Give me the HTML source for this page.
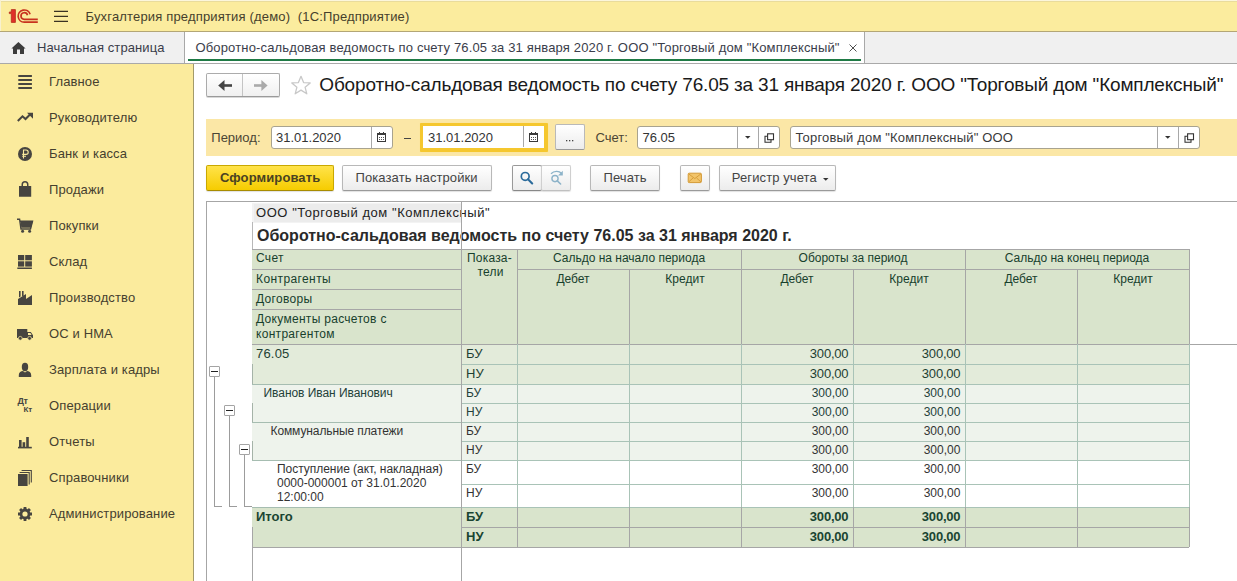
<!DOCTYPE html>
<html><head><meta charset="utf-8"><style>
html,body{margin:0;padding:0}
body{width:1237px;height:581px;overflow:hidden;position:relative;background:#fff;font-family:"Liberation Sans",sans-serif}
.a{position:absolute}
.t{white-space:nowrap}
</style></head><body>
<div class="a" style="left:0px;top:0px;width:1237px;height:31px;background:#fbec9e"></div>
<div class="a" style="left:0px;top:0px;width:1237px;height:1px;background:#fbf6dc"></div>
<div class="a" style="left:0px;top:1px;width:1237px;height:1px;background:#e9dc9c"></div>
<div class="a" style="left:0px;top:0px;width:1px;height:31px;background:#f8f1cf"></div>
<div class="a" style="left:0px;top:31px;width:1237px;height:1px;background:#b3a676"></div>
<svg class="a" style="left:0px;top:0px;" width="44" height="31" viewBox="0 0 44 31"><path d="M11.3,9.6 H15.4 V22.4 H11.3 V13.6 H9.3 V12 H11.3 Z" fill="#e0302a" stroke="#b5301a" stroke-width="0.8" stroke-linejoin="miter"/>
<g fill="none" stroke="#c8321e" stroke-width="1.7">
<path d="M37.8,22.2 H24.3 A6.1,6.1 0 1,1 30.1,14.3"/>
<path d="M37.8,19.3 H24.3 A3.3,3.3 0 1,1 27.5,15.2"/>
</g></svg>
<svg class="a" style="left:50px;top:6px;" width="22" height="20" viewBox="0 0 22 20"><g stroke="#3a3222" stroke-width="1.2"><path d="M4,5.4 H18 M4,10.4 H18 M4,15.4 H18"/></g></svg>
<div class="a t" style="left:85.5px;top:10.00px;font-size:13px;line-height:13px;font-weight:400;color:#463f2c;letter-spacing:0.17px">Бухгалтерия предприятия (демо)&nbsp; (1С:Предприятие)</div>
<div class="a" style="left:0px;top:32px;width:1237px;height:31px;background:#f0f0f0"></div>
<div class="a" style="left:0px;top:63px;width:1237px;height:1px;background:#a9a9a9"></div>
<svg class="a" style="left:6px;top:36px;" width="30" height="24" viewBox="0 0 30 24"><path fill="#3c3c3c" d="M12.4,6 L19.6,12.6 H18 V18 H14 V13.4 H11 V18 H7 V12.6 H5.4 Z"/></svg>
<div class="a t" style="left:37px;top:41.00px;font-size:13px;line-height:13px;font-weight:400;color:#3a3d4a;letter-spacing:0.1px">Начальная страница</div>
<div class="a" style="left:184px;top:32px;width:1px;height:31px;background:#a8a8a8"></div>
<div class="a" style="left:185px;top:32px;width:679px;height:31px;background:#ffffff"></div>
<div class="a" style="left:864px;top:32px;width:1px;height:31px;background:#a8a8a8"></div>
<div class="a t" style="left:195.5px;top:41.00px;font-size:13px;line-height:13px;font-weight:400;color:#3a3d4a;letter-spacing:0.15px">Оборотно-сальдовая ведомость по счету 76.05 за 31 января 2020 г. ООО "Торговый дом "Комплексный"</div>
<div class="a" style="left:188px;top:59px;width:673px;height:2px;background:#1f7a45"></div>
<svg class="a" style="left:846px;top:41px;" width="14" height="14" viewBox="0 0 14 14"><path d="M3.5,3.5 L10.5,10.5 M10.5,3.5 L3.5,10.5" stroke="#505050" stroke-width="1"/></svg>
<div class="a" style="left:0px;top:64px;width:193px;height:517px;background:#fbeb9d"></div>
<div class="a" style="left:193px;top:64px;width:1px;height:517px;background:#a39b6a"></div>
<div class="a t" style="left:49px;top:75.00px;font-size:13px;line-height:13px;font-weight:400;color:#45402f;letter-spacing:0.13px">Главное</div>
<div class="a t" style="left:49px;top:111.00px;font-size:13px;line-height:13px;font-weight:400;color:#45402f;letter-spacing:0.13px">Руководителю</div>
<div class="a t" style="left:49px;top:147.00px;font-size:13px;line-height:13px;font-weight:400;color:#45402f;letter-spacing:0.13px">Банк и касса</div>
<div class="a t" style="left:49px;top:183.00px;font-size:13px;line-height:13px;font-weight:400;color:#45402f;letter-spacing:0.13px">Продажи</div>
<div class="a t" style="left:49px;top:219.00px;font-size:13px;line-height:13px;font-weight:400;color:#45402f;letter-spacing:0.13px">Покупки</div>
<div class="a t" style="left:49px;top:255.00px;font-size:13px;line-height:13px;font-weight:400;color:#45402f;letter-spacing:0.13px">Склад</div>
<div class="a t" style="left:49px;top:291.00px;font-size:13px;line-height:13px;font-weight:400;color:#45402f;letter-spacing:0.13px">Производство</div>
<div class="a t" style="left:49px;top:327.00px;font-size:13px;line-height:13px;font-weight:400;color:#45402f;letter-spacing:0.13px">ОС и НМА</div>
<div class="a t" style="left:49px;top:363.00px;font-size:13px;line-height:13px;font-weight:400;color:#45402f;letter-spacing:0.13px">Зарплата и кадры</div>
<div class="a t" style="left:49px;top:399.00px;font-size:13px;line-height:13px;font-weight:400;color:#45402f;letter-spacing:0.13px">Операции</div>
<div class="a t" style="left:49px;top:435.00px;font-size:13px;line-height:13px;font-weight:400;color:#45402f;letter-spacing:0.13px">Отчеты</div>
<div class="a t" style="left:49px;top:471.00px;font-size:13px;line-height:13px;font-weight:400;color:#45402f;letter-spacing:0.13px">Справочники</div>
<div class="a t" style="left:49px;top:507.00px;font-size:13px;line-height:13px;font-weight:400;color:#45402f;letter-spacing:0.13px">Администрирование</div>
<svg class="a" style="left:17px;top:74px;" width="16" height="16" viewBox="0 0 16 16"><g fill="#474540"><rect x="1.3" y="1" width="13.6" height="2"/><rect x="1.3" y="5" width="13.6" height="2"/><rect x="1.3" y="9" width="13.6" height="2"/><rect x="1.3" y="13" width="13.6" height="2"/></g></svg>
<svg class="a" style="left:16px;top:110px;" width="18" height="14" viewBox="0 0 18 14"><path d="M1.8,11 L6.5,6.3 L9.5,9 L14.5,4" stroke="#474540" stroke-width="2" fill="none"/><path d="M11,2.8 H17 V8.8 Z" fill="#474540"/></svg>
<svg class="a" style="left:17px;top:146px;" width="16" height="16" viewBox="0 0 16 16"><circle cx="8" cy="8" r="7" fill="#474540"/><path d="M6.5,12.5 V4 H9 A2.2,2.2 0 0 1 9,8.4 H5.2 M5.2,10.2 H9" stroke="#fbeb9d" stroke-width="1.1" fill="none"/></svg>
<svg class="a" style="left:17px;top:180px;" width="16" height="18" viewBox="0 0 16 18"><path d="M2,6 H4.5 V4.5 A3.5,3.5 0 0 1 11.5,4.5 V6 H14.2 V16.8 H2 Z M6,6 H10 V4.6 A2,2 0 0 0 6,4.6 Z" fill="#474540" fill-rule="evenodd"/></svg>
<svg class="a" style="left:16px;top:217px;" width="18" height="17" viewBox="0 0 18 17"><path d="M1,2.3 H3.6 L5,12 H14.5 L16.5,4.3 H4.5" fill="none" stroke="#474540" stroke-width="1.4"/><path d="M4.4,4.2 H16.8 L15,10.8 H5.3 Z" fill="#474540"/><circle cx="6.6" cy="14.2" r="1.5" fill="#474540"/><circle cx="13.6" cy="14.2" r="1.5" fill="#474540"/></svg>
<svg class="a" style="left:17px;top:254px;" width="16" height="16" viewBox="0 0 16 16"><g fill="#474540"><rect x="1" y="1" width="6.2" height="5.3"/><rect x="8.2" y="1" width="6.7" height="5.3"/><rect x="1" y="7.3" width="6.2" height="5.3"/><rect x="8.2" y="7.3" width="6.7" height="5.3"/><rect x="0.3" y="13.5" width="14.6" height="1.5"/></g></svg>
<svg class="a" style="left:17px;top:290px;" width="16" height="16" viewBox="0 0 16 16"><path d="M1,15 V9 L9,4 V9 L15,5 V15 Z M2,1 H3.6 V6.5 L2,7.4 Z M5,1 H6.6 V5.4 L5,6.3 Z" fill="#474540"/></svg>
<svg class="a" style="left:16px;top:328px;" width="18" height="13" viewBox="0 0 18 13"><path d="M1,1 H11.3 V4 H14.8 L17,7.2 V10 H1 Z" fill="#474540"/><path d="M12,5 H14.4 L15.6,7 H12 Z" fill="#fbeb9d"/><circle cx="4.3" cy="10.3" r="1.9" fill="#474540" stroke="#fbeb9d" stroke-width="0.7"/><circle cx="13.6" cy="10.3" r="1.9" fill="#474540" stroke="#fbeb9d" stroke-width="0.7"/></svg>
<svg class="a" style="left:17px;top:362px;" width="16" height="16" viewBox="0 0 16 16"><ellipse cx="8" cy="5" rx="3.2" ry="4.2" fill="#474540"/><path d="M1.8,15 V13 C1.8,10.4 4,9.2 6,9 L8,10.5 L10,9 C12,9.2 14.2,10.4 14.2,13 V15 Z" fill="#474540"/></svg>
<div class="a t" style="left:17.5px;top:397px;font-size:9px;line-height:9px;font-weight:700;color:#474540;letter-spacing:-0.3px">Дт</div>
<div class="a t" style="left:23.6px;top:406px;font-size:8px;line-height:8px;font-weight:700;color:#474540;letter-spacing:-0.3px">Кт</div>
<svg class="a" style="left:17px;top:435px;" width="16" height="14" viewBox="0 0 16 14"><g fill="#474540"><rect x="2" y="5" width="2.6" height="7.6"/><rect x="5.6" y="7.2" width="2.6" height="5.4"/><rect x="9.2" y="2" width="2.6" height="10.6"/><rect x="1" y="11.8" width="13.8" height="1.6"/></g></svg>
<svg class="a" style="left:17px;top:468px;" width="16" height="19" viewBox="0 0 16 19"><rect x="1" y="6" width="9.6" height="12" fill="#474540"/><path d="M2.6,4.5 H12.2 V16.5 M4.6,2.5 H14.3 V14.5" stroke="#474540" stroke-width="1.1" fill="none"/></svg>
<svg class="a" style="left:17px;top:506px;" width="16" height="16" viewBox="0 0 16 16"><circle cx="8" cy="8" r="5.4" fill="#474540"/><g stroke="#474540" stroke-width="2.8"><path d="M8,1 V4 M8,12 V15 M1,8 H4 M12,8 H15 M3.05,3.05 L5.2,5.2 M10.8,10.8 L12.95,12.95 M12.95,3.05 L10.8,5.2 M5.2,10.8 L3.05,12.95"/></g><circle cx="8" cy="8" r="2.6" fill="#fbeb9d"/></svg>
<div class="a" style="left:206px;top:73px;width:72px;height:22px;border:1px solid #ababab;border-bottom-color:#9a9a9a;border-radius:2px;background:linear-gradient(#ffffff,#f0f0f0);box-shadow:0 1px 0 #d8d8d8"></div>
<div class="a" style="left:242px;top:74px;width:1px;height:22px;background:#c4c4c4"></div>
<svg class="a" style="left:216px;top:78px;" width="20" height="16" viewBox="0 0 20 16"><path d="M2.2,7.5 L8.5,2 V13 Z" fill="#444"/><rect x="7" y="6.2" width="9" height="2.6" fill="#444"/></svg>
<svg class="a" style="left:252px;top:78px;" width="20" height="16" viewBox="0 0 20 16"><path d="M15.6,7.5 L9.4,2 V13 Z" fill="#aaa"/><rect x="2" y="6.2" width="9" height="2.6" fill="#aaa"/></svg>
<svg class="a" style="left:290px;top:74px;" width="22" height="22" viewBox="0 0 22 22"><path d="M11,2.3 L13.6,8.6 L20.2,8.9 L15.1,13.2 L16.8,19.8 L11,16.1 L5.2,19.8 L6.9,13.2 L1.8,8.9 L8.4,8.6 Z" fill="none" stroke="#c8c8c8" stroke-width="1.3" stroke-linejoin="round"/></svg>
<div class="a t" style="left:319.3px;top:74.92px;font-size:19px;line-height:19px;font-weight:400;color:#1a1a1a;letter-spacing:-0.17px">Оборотно-сальдовая ведомость по счету 76.05 за 31 января 2020 г. ООО "Торговый дом "Комплексный"</div>
<div class="a" style="left:206px;top:119px;width:1031px;height:37px;background:#fbe7a6"></div>
<div class="a t" style="left:211.3px;top:131.00px;font-size:13px;line-height:13px;font-weight:400;color:#4a4535;">Период:</div>
<div class="a" style="left:271px;top:126px;width:120px;height:21px;border:1px solid #a8a38f;border-radius:3px;background:#fff;"></div>
<div class="a" style="left:371px;top:127px;width:1px;height:21px;background:#a8a8a8"></div>
<svg class="a" style="left:377px;top:132px;" width="9" height="10" viewBox="0 0 9 10"><g shape-rendering="crispEdges"><rect x="0.5" y="1.5" width="8" height="8" fill="none" stroke="#3a3a3a" stroke-width="1"/><rect x="0" y="1" width="9" height="2" fill="#3a3a3a"/><rect x="2" y="0" width="1" height="1" fill="#3a3a3a"/><rect x="6" y="0" width="1" height="1" fill="#3a3a3a"/><g fill="#555"><rect x="2" y="5" width="1" height="1"/><rect x="4" y="5" width="1" height="1"/><rect x="6" y="5" width="1" height="1"/><rect x="2" y="7" width="1" height="1"/><rect x="4" y="7" width="1" height="1"/><rect x="6" y="7" width="1" height="1"/></g></g></svg>
<div class="a t" style="left:276px;top:131.00px;font-size:13px;line-height:13px;font-weight:400;color:#333;">31.01.2020</div>
<div class="a" style="left:404px;top:138px;width:7px;height:1px;background:#444"></div>
<div class="a" style="left:420px;top:123px;width:121px;height:22px;border:3px solid #f5c72e;border-right-width:4px;border-bottom-width:4px;border-radius:1px;background:#fff;box-shadow:0 0 1px #f8dd80"></div>
<div class="a" style="left:523px;top:126px;width:1px;height:21px;background:#a8a8a8"></div>
<svg class="a" style="left:529px;top:132px;" width="9" height="10" viewBox="0 0 9 10"><g shape-rendering="crispEdges"><rect x="0.5" y="1.5" width="8" height="8" fill="none" stroke="#3a3a3a" stroke-width="1"/><rect x="0" y="1" width="9" height="2" fill="#3a3a3a"/><rect x="2" y="0" width="1" height="1" fill="#3a3a3a"/><rect x="6" y="0" width="1" height="1" fill="#3a3a3a"/><g fill="#555"><rect x="2" y="5" width="1" height="1"/><rect x="4" y="5" width="1" height="1"/><rect x="6" y="5" width="1" height="1"/><rect x="2" y="7" width="1" height="1"/><rect x="4" y="7" width="1" height="1"/><rect x="6" y="7" width="1" height="1"/></g></g></svg>
<div class="a t" style="left:428px;top:131.00px;font-size:13px;line-height:13px;font-weight:400;color:#333;">31.01.2020</div>
<div class="a" style="left:555px;top:124px;width:28px;height:24px;border:1px solid #b9b9b9;border-bottom-color:#999;border-radius:2px;background:linear-gradient(#ffffff,#ececec)"></div>
<svg class="a" style="left:565px;top:139px;" width="9" height="3" viewBox="0 0 9 3"><g fill="#444"><rect x="1" y="1" width="1.3" height="1.3"/><rect x="4" y="1" width="1.3" height="1.3"/><rect x="7" y="1" width="1.3" height="1.3"/></g></svg>
<div class="a t" style="left:595.5px;top:131.00px;font-size:13px;line-height:13px;font-weight:400;color:#4a4535;">Счет:</div>
<div class="a" style="left:637px;top:126px;width:141px;height:21px;border:1px solid #a8a38f;border-radius:3px;background:#fff;"></div>
<div class="a" style="left:737px;top:127px;width:1px;height:21px;background:#a8a8a8"></div>
<div class="a" style="left:758px;top:127px;width:1px;height:21px;background:#a8a8a8"></div>
<svg class="a" style="left:744px;top:135px;" width="8" height="5" viewBox="0 0 8 5"><path d="M1,1 H6.5 L3.75,3.8 Z" fill="#333"/></svg>
<svg class="a" style="left:764px;top:132.5px;" width="11" height="10" viewBox="0 0 11 10"><path d="M3.3,3.3 H1 V9.3 H7 V6.8" fill="none" stroke="#333" stroke-width="1.1"/><rect x="3.6" y="0.8" width="5.9" height="5.9" fill="none" stroke="#333" stroke-width="1.1"/></svg>
<div class="a t" style="left:642.5px;top:131.00px;font-size:13px;line-height:13px;font-weight:400;color:#333;">76.05</div>
<div class="a" style="left:790px;top:126px;width:408px;height:21px;border:1px solid #a8a38f;border-radius:3px;background:#fff;"></div>
<div class="a" style="left:1157px;top:127px;width:1px;height:21px;background:#a8a8a8"></div>
<div class="a" style="left:1178px;top:127px;width:1px;height:21px;background:#a8a8a8"></div>
<svg class="a" style="left:1164px;top:135px;" width="8" height="5" viewBox="0 0 8 5"><path d="M1,1 H6.5 L3.75,3.8 Z" fill="#333"/></svg>
<svg class="a" style="left:1184px;top:132.5px;" width="11" height="10" viewBox="0 0 11 10"><path d="M3.3,3.3 H1 V9.3 H7 V6.8" fill="none" stroke="#333" stroke-width="1.1"/><rect x="3.6" y="0.8" width="5.9" height="5.9" fill="none" stroke="#333" stroke-width="1.1"/></svg>
<div class="a t" style="left:795.5px;top:131.00px;font-size:13px;line-height:13px;font-weight:400;color:#3a3a3a;letter-spacing:0.17px">Торговый дом "Комплексный" ООО</div>
<div class="a" style="left:206px;top:165px;width:126px;height:24px;border:1px solid #c9a800;border-bottom-color:#a88c00;border-radius:2px;background:linear-gradient(#ffe34a,#f6cc00);box-shadow:0 1px 1px rgba(0,0,0,0.12);"></div>
<div class="a t" style="left:220px;top:171.00px;font-size:13px;line-height:13px;font-weight:700;color:#4a4222;letter-spacing:0.1px">Сформировать</div>
<div class="a" style="left:342px;top:165px;width:148px;height:24px;border:1px solid #b8b8b8;border-bottom-color:#9a9a9a;border-radius:2px;background:linear-gradient(#ffffff,#ececec);box-shadow:0 1px 1px rgba(0,0,0,0.12);"></div>
<div class="a t" style="left:355.5px;top:171.00px;font-size:13px;line-height:13px;font-weight:400;color:#444;letter-spacing:0.1px">Показать настройки</div>
<div class="a" style="left:512px;top:165px;width:28px;height:24px;border:1px solid #999;border-bottom-color:#888;border-radius:2px;background:linear-gradient(#ffffff,#ececec);box-shadow:0 1px 1px rgba(0,0,0,0.12);"></div>
<div class="a" style="left:541px;top:165px;width:28px;height:24px;border:1px solid #cfcfcf;border-bottom-color:#c0c0c0;border-radius:2px;background:linear-gradient(#ffffff,#ececec);box-shadow:0 1px 1px rgba(0,0,0,0.12);"></div>
<svg class="a" style="left:518px;top:168px;" width="18" height="20" viewBox="0 0 18 20"><circle cx="7.2" cy="8.4" r="3.9" fill="none" stroke="#2b6b9b" stroke-width="1.7"/><path d="M10,11.3 L14.2,15.4" stroke="#2b6b9b" stroke-width="2.1" stroke-linecap="round"/></svg>
<svg class="a" style="left:548px;top:168px;" width="18" height="20" viewBox="0 0 18 20"><circle cx="7" cy="10.6" r="3.1" fill="none" stroke="#8db3c9" stroke-width="1.4"/><path d="M9.3,12.9 L12.6,16" stroke="#8db3c9" stroke-width="1.6" stroke-linecap="round"/><path d="M3,5.8 C6,2.6 11,2.6 13.4,5.2" fill="none" stroke="#8db3c9" stroke-width="1.3"/><path d="M14.8,2.8 V7.6 H10 Z" fill="#8db3c9"/></svg>
<div class="a" style="left:590px;top:165px;width:68px;height:24px;border:1px solid #b8b8b8;border-bottom-color:#9a9a9a;border-radius:2px;background:linear-gradient(#ffffff,#ececec);box-shadow:0 1px 1px rgba(0,0,0,0.12);"></div>
<div class="a t" style="left:603.5px;top:171.00px;font-size:13px;line-height:13px;font-weight:400;color:#444;letter-spacing:0.1px">Печать</div>
<div class="a" style="left:680px;top:165px;width:28px;height:24px;border:1px solid #b8b8b8;border-bottom-color:#9a9a9a;border-radius:2px;background:linear-gradient(#ffffff,#ececec);box-shadow:0 1px 1px rgba(0,0,0,0.12);"></div>
<svg class="a" style="left:687px;top:172px;" width="16" height="12" viewBox="0 0 16 12"><rect x="1.2" y="1.2" width="13.2" height="9.4" rx="1" fill="#f2c46a" stroke="#d49a36" stroke-width="1"/><path d="M1.6,1.8 L7.8,6.6 L14,1.8 M1.6,10 L6,6 M14,10 L9.6,6" fill="none" stroke="#d49a36" stroke-width="0.9"/></svg>
<div class="a" style="left:719px;top:165px;width:115px;height:24px;border:1px solid #b8b8b8;border-bottom-color:#9a9a9a;border-radius:2px;background:linear-gradient(#ffffff,#ececec);box-shadow:0 1px 1px rgba(0,0,0,0.12);"></div>
<div class="a t" style="left:731.8px;top:171.00px;font-size:13px;line-height:13px;font-weight:400;color:#444;letter-spacing:0.1px">Регистр учета</div>
<svg class="a" style="left:822px;top:177px;" width="8" height="5" viewBox="0 0 8 5"><path d="M1,1 H6.5 L3.75,3.8 Z" fill="#333"/></svg>
<div class="a" style="left:206px;top:201px;width:1031px;height:1px;background:#a6a6a6"></div>
<div class="a" style="left:206px;top:201px;width:1px;height:380px;background:#a6a6a6"></div>
<div class="a" style="left:252px;top:203px;width:209px;height:20px;background:#f3f3f3"></div>
<div class="a" style="left:254px;top:204px;width:207px;height:18px;background:#ececec"></div>
<div class="a t" style="left:256px;top:206.40px;font-size:13px;line-height:13px;font-weight:400;color:#222;letter-spacing:0.55px">ООО "Торговый дом "Комплексный"</div>
<div class="a" style="left:252px;top:222px;width:1px;height:27px;background:#b8b8b8"></div>
<div class="a t" style="left:257px;top:228.46px;font-size:16px;line-height:16px;font-weight:700;color:#2a2a2a;letter-spacing:0px">Оборотно-сальдовая ведомость по счету 76.05 за 31 января 2020 г.</div>
<div class="a" style="left:252px;top:249px;width:937px;height:95px;background:#d9e4cc"></div>
<div class="a" style="left:252px;top:249px;width:937px;height:1px;background:#a6a6a6"></div>
<div class="a" style="left:252px;top:344px;width:985px;height:1px;background:#a6a6a6"></div>
<div class="a" style="left:252px;top:269px;width:209px;height:1px;background:#a6a6a6"></div>
<div class="a" style="left:252px;top:289px;width:209px;height:1px;background:#a6a6a6"></div>
<div class="a" style="left:252px;top:309px;width:209px;height:1px;background:#a6a6a6"></div>
<div class="a" style="left:517px;top:269px;width:672px;height:1px;background:#a6a6a6"></div>
<div class="a" style="left:517px;top:249px;width:1px;height:95px;background:#a6a6a6"></div>
<div class="a" style="left:629px;top:269px;width:1px;height:75px;background:#a6a6a6"></div>
<div class="a" style="left:741px;top:249px;width:1px;height:95px;background:#a6a6a6"></div>
<div class="a" style="left:853px;top:269px;width:1px;height:75px;background:#a6a6a6"></div>
<div class="a" style="left:965px;top:249px;width:1px;height:95px;background:#a6a6a6"></div>
<div class="a" style="left:1077px;top:269px;width:1px;height:75px;background:#a6a6a6"></div>
<div class="a" style="left:1189px;top:249px;width:1px;height:95px;background:#a6a6a6"></div>
<div class="a t" style="left:256px;top:252.34px;font-size:12px;line-height:12px;font-weight:400;color:#17402c;letter-spacing:0.3px">Счет</div>
<div class="a t" style="left:256px;top:273.04px;font-size:12px;line-height:12px;font-weight:400;color:#17402c;letter-spacing:0.4px">Контрагенты</div>
<div class="a t" style="left:256px;top:293.24px;font-size:12px;line-height:12px;font-weight:400;color:#17402c;letter-spacing:0.3px">Договоры</div>
<div class="a t" style="left:256px;top:313.24px;font-size:12px;line-height:12px;font-weight:400;color:#17402c;letter-spacing:0.3px">Документы расчетов с</div>
<div class="a t" style="left:256px;top:327.64px;font-size:12px;line-height:12px;font-weight:400;color:#17402c;letter-spacing:0.3px">контрагентом</div>
<div class="a t" style="left:467px;top:252.34px;font-size:12px;line-height:12px;font-weight:400;color:#17402c;letter-spacing:0.2px">Показа-</div>
<div class="a t" style="left:477.5px;top:265.84px;font-size:12px;line-height:12px;font-weight:400;color:#17402c;letter-spacing:0.2px">тели</div>
<div class="a t" style="left:517px;width:224px;text-align:center;top:251.84px;font-size:12px;line-height:12px;font-weight:400;color:#17402c;letter-spacing:0px">Сальдо на начало периода</div>
<div class="a t" style="left:741px;width:224px;text-align:center;top:251.84px;font-size:12px;line-height:12px;font-weight:400;color:#17402c;letter-spacing:0px">Обороты за период</div>
<div class="a t" style="left:965px;width:224px;text-align:center;top:251.84px;font-size:12px;line-height:12px;font-weight:400;color:#17402c;letter-spacing:0px">Сальдо на конец периода</div>
<div class="a t" style="left:517px;width:112px;text-align:center;top:272.84px;font-size:12px;line-height:12px;font-weight:400;color:#17402c;letter-spacing:0px">Дебет</div>
<div class="a t" style="left:629px;width:112px;text-align:center;top:272.84px;font-size:12px;line-height:12px;font-weight:400;color:#17402c;letter-spacing:0px">Кредит</div>
<div class="a t" style="left:741px;width:112px;text-align:center;top:272.84px;font-size:12px;line-height:12px;font-weight:400;color:#17402c;letter-spacing:0px">Дебет</div>
<div class="a t" style="left:853px;width:112px;text-align:center;top:272.84px;font-size:12px;line-height:12px;font-weight:400;color:#17402c;letter-spacing:0px">Кредит</div>
<div class="a t" style="left:965px;width:112px;text-align:center;top:272.84px;font-size:12px;line-height:12px;font-weight:400;color:#17402c;letter-spacing:0px">Дебет</div>
<div class="a t" style="left:1077px;width:112px;text-align:center;top:272.84px;font-size:12px;line-height:12px;font-weight:400;color:#17402c;letter-spacing:0px">Кредит</div>
<div class="a" style="left:252px;top:345px;width:937px;height:39px;background:#e3ebda"></div>
<div class="a" style="left:461px;top:364px;width:728px;height:1px;background:#a9c3b7"></div>
<div class="a" style="left:252px;top:384px;width:209px;height:1px;background:#a6bdb1"></div>
<div class="a" style="left:461px;top:384px;width:728px;height:1px;background:#a9c3b7"></div>
<div class="a" style="left:252px;top:364px;width:1px;height:20px;background:#a5b3a8"></div>
<div class="a t" style="left:256px;top:347.00px;font-size:13px;line-height:13px;font-weight:400;color:#1e3f33;letter-spacing:0.2px">76.05</div>
<div class="a t" style="left:466px;top:347.00px;font-size:13px;line-height:13px;font-weight:400;color:#1e3f33;">БУ</div>
<div class="a t" style="left:741px;width:107.4px;text-align:right;top:347.00px;font-size:13px;line-height:13px;font-weight:400;color:#1e3f33;letter-spacing:-0.2px">300,00</div>
<div class="a t" style="left:853px;width:107.4px;text-align:right;top:347.00px;font-size:13px;line-height:13px;font-weight:400;color:#1e3f33;letter-spacing:-0.2px">300,00</div>
<div class="a t" style="left:466px;top:367.00px;font-size:13px;line-height:13px;font-weight:400;color:#1e3f33;">НУ</div>
<div class="a t" style="left:741px;width:107.4px;text-align:right;top:367.00px;font-size:13px;line-height:13px;font-weight:400;color:#1e3f33;letter-spacing:-0.2px">300,00</div>
<div class="a t" style="left:853px;width:107.4px;text-align:right;top:367.00px;font-size:13px;line-height:13px;font-weight:400;color:#1e3f33;letter-spacing:-0.2px">300,00</div>
<div class="a" style="left:252px;top:385px;width:937px;height:37px;background:#eef3ec"></div>
<div class="a" style="left:461px;top:403px;width:728px;height:1px;background:#a9c3b7"></div>
<div class="a" style="left:252px;top:422px;width:209px;height:1px;background:#a6bdb1"></div>
<div class="a" style="left:461px;top:422px;width:728px;height:1px;background:#a9c3b7"></div>
<div class="a" style="left:252px;top:403px;width:1px;height:19px;background:#a5b3a8"></div>
<div class="a t" style="left:263.5px;top:387.34px;font-size:12px;line-height:12px;font-weight:400;color:#24413a;letter-spacing:-0.05px">Иванов Иван Иванович</div>
<div class="a t" style="left:466px;top:386.84px;font-size:12px;line-height:12px;font-weight:400;color:#24413a;">БУ</div>
<div class="a t" style="left:741px;width:107.4px;text-align:right;top:386.84px;font-size:12px;line-height:12px;font-weight:400;color:#24413a;letter-spacing:0px">300,00</div>
<div class="a t" style="left:853px;width:107.4px;text-align:right;top:386.84px;font-size:12px;line-height:12px;font-weight:400;color:#24413a;letter-spacing:0px">300,00</div>
<div class="a t" style="left:466px;top:405.84px;font-size:12px;line-height:12px;font-weight:400;color:#24413a;">НУ</div>
<div class="a t" style="left:741px;width:107.4px;text-align:right;top:405.84px;font-size:12px;line-height:12px;font-weight:400;color:#24413a;letter-spacing:0px">300,00</div>
<div class="a t" style="left:853px;width:107.4px;text-align:right;top:405.84px;font-size:12px;line-height:12px;font-weight:400;color:#24413a;letter-spacing:0px">300,00</div>
<div class="a" style="left:252px;top:423px;width:937px;height:37px;background:#eef3ec"></div>
<div class="a" style="left:461px;top:441px;width:728px;height:1px;background:#a9c3b7"></div>
<div class="a" style="left:252px;top:460px;width:209px;height:1px;background:#a6bdb1"></div>
<div class="a" style="left:461px;top:460px;width:728px;height:1px;background:#a9c3b7"></div>
<div class="a" style="left:252px;top:441px;width:1px;height:19px;background:#a5b3a8"></div>
<div class="a t" style="left:270.5px;top:425.34px;font-size:12px;line-height:12px;font-weight:400;color:#333;letter-spacing:-0.1px">Коммунальные платежи</div>
<div class="a t" style="left:466px;top:424.84px;font-size:12px;line-height:12px;font-weight:400;color:#333;">БУ</div>
<div class="a t" style="left:741px;width:107.4px;text-align:right;top:424.84px;font-size:12px;line-height:12px;font-weight:400;color:#333;letter-spacing:0px">300,00</div>
<div class="a t" style="left:853px;width:107.4px;text-align:right;top:424.84px;font-size:12px;line-height:12px;font-weight:400;color:#333;letter-spacing:0px">300,00</div>
<div class="a t" style="left:466px;top:443.84px;font-size:12px;line-height:12px;font-weight:400;color:#333;">НУ</div>
<div class="a t" style="left:741px;width:107.4px;text-align:right;top:443.84px;font-size:12px;line-height:12px;font-weight:400;color:#333;letter-spacing:0px">300,00</div>
<div class="a t" style="left:853px;width:107.4px;text-align:right;top:443.84px;font-size:12px;line-height:12px;font-weight:400;color:#333;letter-spacing:0px">300,00</div>
<div class="a" style="left:252px;top:461px;width:937px;height:46px;background:#ffffff"></div>
<div class="a" style="left:461px;top:484px;width:728px;height:1px;background:#a9c3b7"></div>
<div class="a" style="left:252px;top:507px;width:209px;height:1px;background:#a6bdb1"></div>
<div class="a" style="left:461px;top:507px;width:728px;height:1px;background:#a9c3b7"></div>
<div class="a t" style="left:466px;top:463.14px;font-size:12px;line-height:12px;font-weight:400;color:#333;">БУ</div>
<div class="a t" style="left:741px;width:107.4px;text-align:right;top:463.14px;font-size:12px;line-height:12px;font-weight:400;color:#333;letter-spacing:0px">300,00</div>
<div class="a t" style="left:853px;width:107.4px;text-align:right;top:463.14px;font-size:12px;line-height:12px;font-weight:400;color:#333;letter-spacing:0px">300,00</div>
<div class="a t" style="left:466px;top:487.14px;font-size:12px;line-height:12px;font-weight:400;color:#333;">НУ</div>
<div class="a t" style="left:741px;width:107.4px;text-align:right;top:487.14px;font-size:12px;line-height:12px;font-weight:400;color:#333;letter-spacing:0px">300,00</div>
<div class="a t" style="left:853px;width:107.4px;text-align:right;top:487.14px;font-size:12px;line-height:12px;font-weight:400;color:#333;letter-spacing:0px">300,00</div>
<div class="a" style="left:252px;top:508px;width:937px;height:39px;background:#d9e4cc"></div>
<div class="a" style="left:461px;top:527px;width:728px;height:1px;background:#a6a6a6"></div>
<div class="a" style="left:252px;top:547px;width:937px;height:1px;background:#a6a6a6"></div>
<div class="a" style="left:252px;top:527px;width:1px;height:20px;background:#a6a6a6"></div>
<div class="a t" style="left:256px;top:510.00px;font-size:13px;line-height:13px;font-weight:700;color:#1a4532;letter-spacing:0px">Итого</div>
<div class="a t" style="left:466px;top:510.00px;font-size:13px;line-height:13px;font-weight:700;color:#1a4532;">БУ</div>
<div class="a t" style="left:741px;width:107.4px;text-align:right;top:510.00px;font-size:13px;line-height:13px;font-weight:700;color:#1a4532;letter-spacing:-0.2px">300,00</div>
<div class="a t" style="left:853px;width:107.4px;text-align:right;top:510.00px;font-size:13px;line-height:13px;font-weight:700;color:#1a4532;letter-spacing:-0.2px">300,00</div>
<div class="a t" style="left:466px;top:530.00px;font-size:13px;line-height:13px;font-weight:700;color:#1a4532;">НУ</div>
<div class="a t" style="left:741px;width:107.4px;text-align:right;top:530.00px;font-size:13px;line-height:13px;font-weight:700;color:#1a4532;letter-spacing:-0.2px">300,00</div>
<div class="a t" style="left:853px;width:107.4px;text-align:right;top:530.00px;font-size:13px;line-height:13px;font-weight:700;color:#1a4532;letter-spacing:-0.2px">300,00</div>
<div class="a t" style="left:277px;top:462.64px;font-size:12px;line-height:12px;font-weight:400;color:#333;letter-spacing:-0.03px">Поступление (акт, накладная)</div>
<div class="a t" style="left:277px;top:476.84px;font-size:12px;line-height:12px;font-weight:400;color:#333;letter-spacing:0px">0000-000001 от 31.01.2020</div>
<div class="a t" style="left:277px;top:490.84px;font-size:12px;line-height:12px;font-weight:400;color:#333;letter-spacing:0px">12:00:00</div>
<div class="a" style="left:461px;top:344px;width:1px;height:163px;background:#a6a6a6"></div>
<div class="a" style="left:517px;top:344px;width:1px;height:163px;background:#a9c3b7"></div>
<div class="a" style="left:517px;top:507px;width:1px;height:40px;background:#a6a6a6"></div>
<div class="a" style="left:629px;top:344px;width:1px;height:163px;background:#a9c3b7"></div>
<div class="a" style="left:629px;top:507px;width:1px;height:40px;background:#a6a6a6"></div>
<div class="a" style="left:741px;top:344px;width:1px;height:163px;background:#a9c3b7"></div>
<div class="a" style="left:741px;top:507px;width:1px;height:40px;background:#a6a6a6"></div>
<div class="a" style="left:853px;top:344px;width:1px;height:163px;background:#a9c3b7"></div>
<div class="a" style="left:853px;top:507px;width:1px;height:40px;background:#a6a6a6"></div>
<div class="a" style="left:965px;top:344px;width:1px;height:163px;background:#a9c3b7"></div>
<div class="a" style="left:965px;top:507px;width:1px;height:40px;background:#a6a6a6"></div>
<div class="a" style="left:1077px;top:344px;width:1px;height:163px;background:#a9c3b7"></div>
<div class="a" style="left:1077px;top:507px;width:1px;height:40px;background:#a6a6a6"></div>
<div class="a" style="left:1189px;top:344px;width:1px;height:163px;background:#a9c3b7"></div>
<div class="a" style="left:1189px;top:507px;width:1px;height:40px;background:#a6a6a6"></div>
<div class="a" style="left:461px;top:201px;width:1px;height:380px;background:#a6a6a6"></div>
<div class="a" style="left:252px;top:547px;width:1px;height:34px;background:#a6a6a6"></div>
<div class="a" style="left:214px;top:377px;width:1px;height:129px;background:#9c9c9c"></div>
<div class="a" style="left:214px;top:506px;width:8px;height:1px;background:#9c9c9c"></div>
<div class="a" style="left:209px;top:366px;width:9px;height:9px;border:1px solid #a4a4a4;background:#fff;border-radius:1px"></div>
<div class="a" style="left:211px;top:371px;width:7px;height:1px;background:#222"></div>
<div class="a" style="left:229px;top:416px;width:1px;height:90px;background:#9c9c9c"></div>
<div class="a" style="left:229px;top:506px;width:8px;height:1px;background:#9c9c9c"></div>
<div class="a" style="left:224px;top:405px;width:9px;height:9px;border:1px solid #a4a4a4;background:#fff;border-radius:1px"></div>
<div class="a" style="left:226px;top:410px;width:7px;height:1px;background:#222"></div>
<div class="a" style="left:244px;top:455px;width:1px;height:51px;background:#9c9c9c"></div>
<div class="a" style="left:244px;top:506px;width:8px;height:1px;background:#9c9c9c"></div>
<div class="a" style="left:239px;top:444px;width:9px;height:9px;border:1px solid #a4a4a4;background:#fff;border-radius:1px"></div>
<div class="a" style="left:241px;top:449px;width:7px;height:1px;background:#222"></div>
</body></html>
